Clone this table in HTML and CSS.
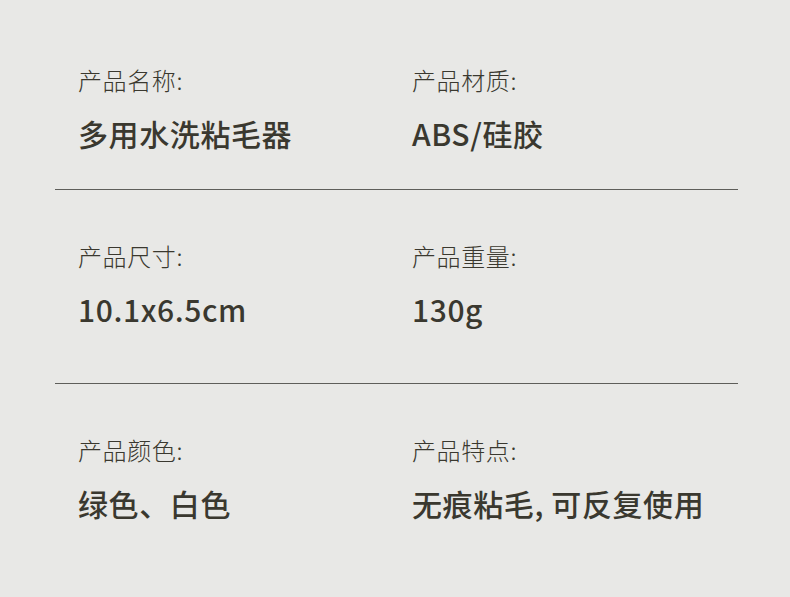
FILE: index.html
```html
<!DOCTYPE html>
<html lang="zh-CN">
<head>
<meta charset="utf-8">
<link rel="stylesheet" href="styles.css">
</head>
<body>
<div class="specs">
  <div class="row first">
    <div class="cell"><div class="label">产品名称:</div><div class="value">多用水洗粘毛器</div></div>
    <div class="cell"><div class="label">产品材质:</div><div class="value">ABS/硅胶</div></div>
  </div>
  <div class="row middle">
    <div class="cell"><div class="label">产品尺寸:</div><div class="value">10.1x6.5cm</div></div>
    <div class="cell"><div class="label">产品重量:</div><div class="value">130g</div></div>
  </div>
  <div class="row last">
    <div class="cell"><div class="label">产品颜色:</div><div class="value">绿色、白色</div></div>
    <div class="cell"><div class="label">产品特点:</div><div class="value">无痕粘毛, 可反复使用</div></div>
  </div>
</div>
</body>
</html>
```
FILE: styles.css
```css
html, body {
  margin: 0;
  padding: 0;
  background: #e8e8e6;
}
body {
  width: 790px;
  height: 597px;
  overflow: hidden;
  font-family: "Noto Sans CJK SC", "Noto Sans", sans-serif;
  color: #3a382f;
}
.specs {
  padding: 0 52px 0 55px;
}
.row {
  display: grid;
  grid-template-columns: 334px 1fr;
  padding: 54px 23px 41px;
  border-bottom: 1px solid #5e5e5a;
}
.row.first {
  padding-top: 68px;
}
.row.middle {
  padding-bottom: 59px;
}
.row.last {
  border-bottom: none;
}
.cell {
  display: flex;
  flex-direction: column;
  gap: 26px;
}
.label {
  font-size: 24px;
  line-height: 24px;
  font-weight: 300;
  letter-spacing: 0.6px;
}
.value {
  font-size: 30px;
  line-height: 30px;
  font-weight: 500;
  letter-spacing: 0.6px;
}
```
